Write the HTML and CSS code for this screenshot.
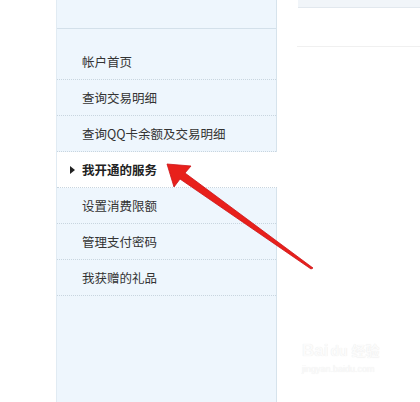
FILE: index.html
```html
<!DOCTYPE html>
<html lang="zh-CN">
<head>
<meta charset="utf-8">
<title>我开通的服务</title>
<link rel="stylesheet" href="styles.css">
</head>
<body>
<div class="page">
  <aside class="sidebar">
    <div class="side-top"></div>
    <ul class="menu">
      <li class="item">帐户首页</li>
      <li class="item">查询交易明细</li>
      <li class="item">查询QQ卡余额及交易明细</li>
      <li class="item active"><span class="tri"></span>我开通的服务</li>
      <li class="item">设置消费限额</li>
      <li class="item">管理支付密码</li>
      <li class="item">我获赠的礼品</li>
    </ul>
  </aside>
  <main class="content">
    <div class="content-top"></div>
    <div class="content-line"></div>
  </main>
</div>
<div class="watermark">
  <div class="wm-logo">Bai<span class="wm-du">du</span><span class="wm-cn">经验</span></div>
  <div class="wm-url">jingyan.baidu.com</div>
</div>
<svg class="arrow" width="420" height="402" viewBox="0 0 420 402" xmlns="http://www.w3.org/2000/svg">
  <polygon points="167,164 191,166 185,173 313,268 311,269 180,179 174,187" fill="#e8201b" stroke="#cc1419" stroke-width="0.8" stroke-linejoin="round"/>
</svg>
</body>
</html>
```
FILE: styles.css
```css
html, body {
  margin: 0;
  padding: 0;
  background: #ffffff;
  font-family: "Noto Sans CJK SC", "Microsoft YaHei", sans-serif;
}
.page {
  display: flex;
  height: 402px;
  padding-left: 56px;
  overflow: hidden;
}
.sidebar {
  width: 219px;
  flex: none;
  background: #eef6fd;
  border-left: 1px solid #e1ebf3;
  border-right: 1px solid #d6e3ec;
}
.side-top {
  height: 28px;
  border-bottom: 1px solid #d3e0ea;
  margin-bottom: 15px;
}
.menu {
  list-style: none;
  margin: 0;
  padding: 0;
}
.item {
  position: relative;
  height: 35px;
  line-height: 35px;
  padding-left: 25px;
  font-size: 12.5px;
  color: #333333;
  border-bottom: 1px dotted #c8d5df;
}
.item.active {
  background: #ffffff;
  font-weight: bold;
  color: #222222;
  margin-right: -1px;
}
.tri {
  position: absolute;
  left: 13px;
  top: 14px;
  width: 0;
  height: 0;
  border-top: 4px solid transparent;
  border-bottom: 4px solid transparent;
  border-left: 5px solid #222222;
}
.content {
  flex: 1;
  padding-left: 20px;
}
.content-top {
  height: 7px;
  background: #f1f5f9;
  border-bottom: 1px solid #e2e8ee;
  margin-left: 1px;
}
.content-line {
  margin-top: 38px;
  border-top: 1px solid #f0f0f0;
}
.watermark {
  position: absolute;
  left: 302px;
  top: 340px;
  color: #fbfbfb;
  text-shadow: 0 0 1px #e4e4e4;
  font-family: "Liberation Sans", Arial, sans-serif;
}
.wm-logo {
  font-size: 17px;
  font-weight: bold;
  line-height: 20px;
}
.wm-du {
  font-size: 14px;
  margin-left: 2px;
}
.wm-cn {
  font-family: "Noto Sans CJK SC", sans-serif;
  font-size: 14px;
  margin-left: 4px;
}
.wm-url {
  font-size: 9px;
  line-height: 12px;
  margin-top: 2px;
}
.arrow {
  position: absolute;
  left: 0;
  top: 0;
  pointer-events: none;
}
```
